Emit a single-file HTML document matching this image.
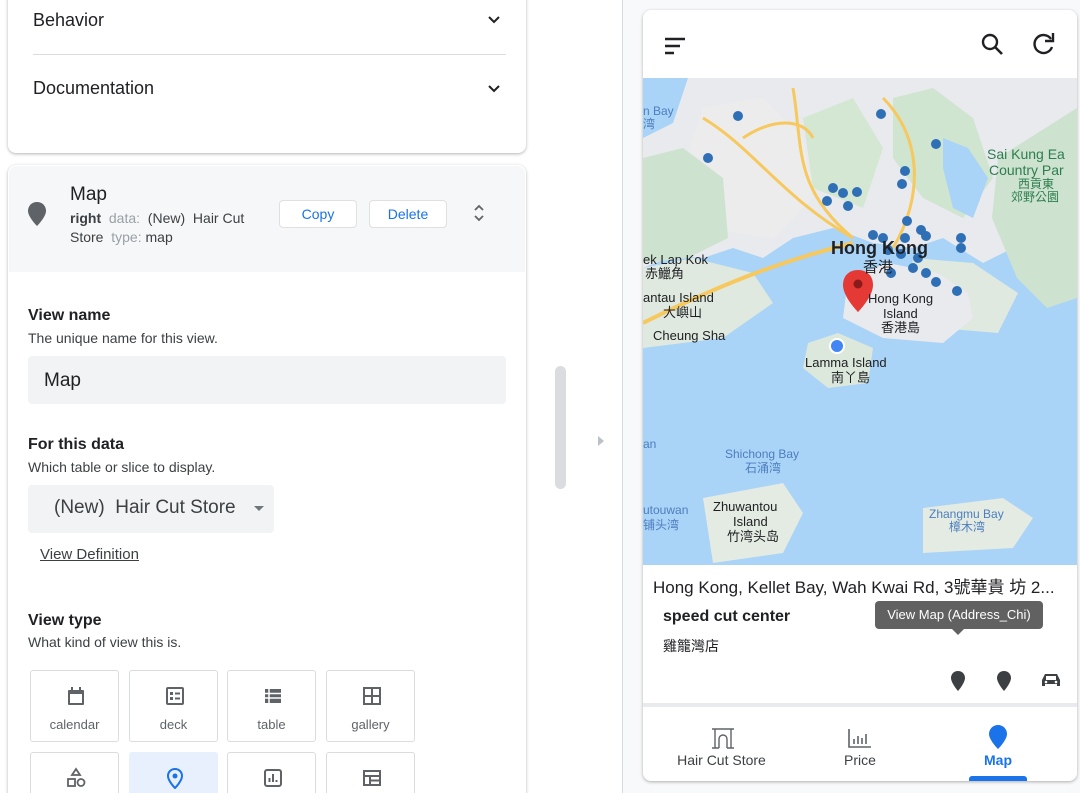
<!DOCTYPE html>
<html style="overflow:hidden;height:793px"><head><meta charset="utf-8"><style>
*{box-sizing:border-box;margin:0;padding:0}
body{width:1080px;height:793px;overflow:hidden;background:#fff;font-family:"Liberation Sans","Noto Sans CJK TC",sans-serif;position:relative;color:#202124}
.a{position:absolute}
.card{background:#fff;border-radius:8px;box-shadow:0 1px 3px rgba(0,0,0,.3)}
.lbl{font-size:16px;font-weight:bold;color:#202124}
.sub{font-size:14px;color:#3c4043}
.vt{position:absolute;width:89px;height:72px;border:1px solid #dadce0;border-radius:3px;background:#fff;text-align:center;font-size:13px;color:#5f6368}
.vt span{position:absolute;left:0;right:0;top:46px}
.vt svg{position:absolute;left:34px;top:14px}
.btn{position:absolute;background:#fff;border:1px solid #e0e0e0;border-radius:4px;color:#1a73e8;font-size:14px;text-align:center;line-height:26px}
</style></head><body>
<div class="a" style="left:0;top:0;width:1080px;height:793px;overflow:hidden">
<!-- card 1 -->
<div class="a card" style="left:8px;top:-10px;width:518px;height:163px"></div>
<div class="a" style="left:33px;top:10px;font-size:18px;color:#202124">Behavior</div>
<svg class="a" style="left:488px;top:15px" width="12" height="10"><path d="M1 2l5 5 5-5" stroke="#202124" stroke-width="2" fill="none"/></svg>
<div class="a" style="left:33px;top:54px;width:473px;border-top:1px solid #dadce0"></div>
<div class="a" style="left:33px;top:78px;font-size:18px;color:#202124">Documentation</div>
<svg class="a" style="left:488px;top:84px" width="12" height="10"><path d="M1 2l5 5 5-5" stroke="#202124" stroke-width="2" fill="none"/></svg>
<!-- card 2 -->
<div class="a card" style="left:8px;top:165px;width:518px;height:660px"></div>
<div class="a" style="left:9px;top:166px;width:516px;height:106px;background:#f6f7f9;border-radius:8px 8px 0 0"></div>
<svg class="a" style="left:27px;top:201px" width="20" height="26"><path d="M10 1C4.5 1 1 5 1 10c0 6 9 15 9 15s9-9 9-15C19 5 15.5 1 10 1z" fill="#5f6368"/></svg>
<div class="a" style="left:70px;top:184px;font-size:19px;color:#202124">Map</div>
<div class="a" style="left:70px;top:209px;font-size:14px;line-height:19px;color:#3c4043;width:178px"><b>right</b> &nbsp;<span style="color:#9aa0a6">data:</span> &nbsp;(New)&nbsp; Hair Cut Store &nbsp;<span style="color:#9aa0a6">type:</span> map</div>
<div class="btn" style="left:279px;top:200px;width:78px">Copy</div>
<div class="btn" style="left:369px;top:200px;width:78px">Delete</div>
<svg class="a" style="left:473px;top:204px" width="12" height="18"><path d="M2 6l4-4 4 4M2 12l4 4 4-4" stroke="#5f6368" stroke-width="1.8" fill="none"/></svg>
<div class="a lbl" style="left:28px;top:307px">View name</div>
<div class="a sub" style="left:28px;top:330px">The unique name for this view.</div>
<div class="a" style="left:28px;top:356px;width:478px;height:48px;background:#f1f3f4;border-radius:4px;font-size:19px;padding:14px 16px;color:#202124">Map</div>
<div class="a lbl" style="left:28px;top:436px">For this data</div>
<div class="a sub" style="left:28px;top:459px">Which table or slice to display.</div>
<div class="a" style="left:28px;top:485px;width:246px;height:48px;background:#f1f3f4;border-radius:4px;font-size:19px;padding:12px 0 0 26px;color:#3c4043">(New)&nbsp; Hair Cut Store</div>
<svg class="a" style="left:254px;top:506px" width="12" height="7"><path d="M0 0h10L5 5z" fill="#70757a"/></svg>
<div class="a" style="left:40px;top:546px;font-size:15px;color:#3c4043;text-decoration:underline">View Definition</div>
<div class="a lbl" style="left:28px;top:612px">View type</div>
<div class="a sub" style="left:28px;top:634px">What kind of view this is.</div>
<div class="vt" style="left:30px;top:670px"><svg width="22" height="22"><rect x="3" y="5" width="16" height="15" rx="1" fill="#5f6368"/><rect x="5" y="9" width="12" height="9" fill="#fff"/><rect x="6" y="2" width="2" height="4" fill="#5f6368"/><rect x="14" y="2" width="2" height="4" fill="#5f6368"/></svg><span>calendar</span></div>
<div class="vt" style="left:129px;top:670px"><svg width="22" height="22"><rect x="3" y="3" width="16" height="16" rx="1" stroke="#5f6368" stroke-width="2" fill="none"/><rect x="6" y="7" width="3" height="3" fill="#5f6368"/><rect x="6" y="12" width="3" height="3" fill="#5f6368"/><path d="M11 8.5h5M11 13.5h5" stroke="#5f6368" stroke-width="2"/></svg><span>deck</span></div>
<div class="vt" style="left:227px;top:670px"><svg width="22" height="22"><rect x="3" y="4" width="16" height="14" fill="#5f6368"/><path d="M3 8.5h16M3 13h16M7 4v14" stroke="#fff" stroke-width="1.5"/></svg><span>table</span></div>
<div class="vt" style="left:326px;top:670px"><svg width="22" height="22"><rect x="3" y="3" width="16" height="16" stroke="#5f6368" stroke-width="2" fill="none"/><path d="M11 3v16M3 11h16" stroke="#5f6368" stroke-width="2"/></svg><span>gallery</span></div>
<div class="vt" style="left:30px;top:752px"><svg width="22" height="22"><path d="M11 2l4 6H7z" stroke="#5f6368" stroke-width="1.8" fill="none"/><rect x="3" y="12" width="7" height="7" stroke="#5f6368" stroke-width="1.8" fill="none"/><circle cx="16" cy="15.5" r="3.5" stroke="#5f6368" stroke-width="1.8" fill="none"/></svg></div>
<div class="vt" style="left:129px;top:752px;background:#e8f0fe;border-color:#e8f0fe"><svg width="22" height="22"><path d="M11 2c-4 0-7 3-7 7 0 5 7 12 7 12s7-7 7-12c0-4-3-7-7-7z" stroke="#1a73e8" stroke-width="2" fill="none"/><circle cx="11" cy="9" r="2.5" fill="#1a73e8"/></svg></div>
<div class="vt" style="left:227px;top:752px"><svg width="22" height="22"><rect x="3" y="3" width="16" height="16" rx="2" stroke="#5f6368" stroke-width="2" fill="none"/><path d="M7.5 15v-4M11 15V7M14.5 15v-2" stroke="#5f6368" stroke-width="2"/></svg></div>
<div class="vt" style="left:326px;top:752px"><svg width="22" height="22"><rect x="3" y="4" width="16" height="14" stroke="#5f6368" stroke-width="2" fill="none"/><path d="M3 9h16M9 9v9M9 13.5h10" stroke="#5f6368" stroke-width="2"/></svg></div>
<!-- scrollbar/divider -->
<div class="a" style="left:555px;top:366px;width:11px;height:123px;background:#dadce0;border-radius:6px"></div>
<svg class="a" style="left:597px;top:435px" width="8" height="12"><path d="M1 1l6 5-6 5z" fill="#bdc1c6"/></svg>
<div class="a" style="left:622px;top:0;width:1px;height:793px;background:#dadce0"></div>
<div class="a" style="left:623px;top:0;width:457px;height:793px;background:#f8f9fa"></div>
<!-- phone -->
<div class="a card" style="left:643px;top:10px;width:434px;height:771px;overflow:hidden">
 <svg class="a" style="left:20px;top:26px" width="24" height="20"><path d="M2 3h20M2 10h15M2 17h9" stroke="#202124" stroke-width="2.6"/></svg>
 <svg class="a" style="left:337px;top:22px" width="26" height="26"><circle cx="10" cy="10" r="7" stroke="#202124" stroke-width="2.4" fill="none"/><path d="M15 15l7 7" stroke="#202124" stroke-width="2.6"/></svg>
 <svg class="a" style="left:387px;top:20px" width="28" height="28"><path d="M21 9A9 9 0 1 0 22 17" stroke="#202124" stroke-width="2.4" fill="none"/><path d="M23 3v8h-8" stroke="#202124" stroke-width="2.4" fill="none"/></svg>
 <svg class="a" style="left:0;top:68px" width="434" height="487">
  <rect width="434" height="487" fill="#a9d3f7"/>
  <path d="M45 0H434V40L420 80 395 130 370 170 340 185 300 160 270 170 230 165 190 150 150 160 120 180 90 170 60 180 30 178 0 190V60L30 45z" fill="#e8eaed"/>
  <path d="M60 30l60-10 40 40 10 60-40 40-70-10-20-60z" fill="#ececec"/>
  <path d="M250 20l40-10 40 30 20 60-30 40-40-20-30-40z" fill="#cfe5d0"/>
  <path d="M160 40l50-20 30 50-20 60-50-20z" fill="#d3e7d3"/>
  <path d="M300 60l25 10 20 30-15 40-20-10-10-40z" fill="#a9d3f7"/>
  <path d="M355 80l79-50v190l-30 10-30-30-25-60z" fill="#cde3cf"/>
  <path d="M0 80l40-10 40 30 5 60-40 20-45 5z" fill="#cde3cf"/>
  <path d="M0 190l50-10 60 15 20 30-50 35-80 10z" fill="#dfe9df"/>
  <path d="M270 180l60 5 45 30-20 40-60-5-30-30z" fill="#dfe9df"/>
  <path d="M205 200l40-15 50 10 30 20 5 25-30 25-60-5-40-20z" fill="#e8eaed"/>
  <path d="M165 265l30-10 35 15-5 35-40 5-25-20z" fill="#dde8dd"/>
  <path d="M60 420l80-15 20 30-20 40-70 10z" fill="#e3ebe3"/>
  <path d="M280 430l80-10 30 20-20 30-90 5z" fill="#e3ebe3"/>
  <path d="M0 245C90 200 150 180 210 165" stroke="#f6c85e" stroke-width="4" fill="none"/>
  <path d="M60 40c50 30 80 80 150 120M150 10c10 60 0 100 60 150M240 20c40 40 40 100 10 150M100 60c30-20 60-20 70 0" stroke="#f6c85e" stroke-width="3" fill="none"/>
  <g fill="#2f6fb5">
   <circle cx="95" cy="38" r="5"/><circle cx="238" cy="36" r="5"/><circle cx="65" cy="80" r="5"/><circle cx="293" cy="66" r="5"/><circle cx="262" cy="93" r="5"/><circle cx="259" cy="106" r="5"/>
   <circle cx="190" cy="110" r="5"/><circle cx="200" cy="115" r="5"/><circle cx="214" cy="114" r="5"/><circle cx="184" cy="123" r="5"/><circle cx="205" cy="128" r="5"/>
   <circle cx="264" cy="143" r="5"/><circle cx="278" cy="152" r="5"/><circle cx="230" cy="157" r="5"/><circle cx="240" cy="160" r="5"/><circle cx="262" cy="160" r="5"/><circle cx="283" cy="158" r="5"/>
   <circle cx="245" cy="172" r="5"/><circle cx="258" cy="176" r="5"/><circle cx="275" cy="180" r="5"/><circle cx="318" cy="160" r="5"/><circle cx="318" cy="170" r="5"/>
   <circle cx="270" cy="190" r="5"/><circle cx="283" cy="195" r="5"/><circle cx="293" cy="204" r="5"/><circle cx="314" cy="213" r="5"/><circle cx="248" cy="195" r="5"/>
  </g>
  <circle cx="194" cy="268" r="7" fill="#4285f4" stroke="#fff" stroke-width="2"/>
  <path d="M215 192c-9 0-15 6-15 15 0 12 15 27 15 27s15-15 15-27c0-9-6-15-15-15z" fill="#e53935"/><circle cx="215" cy="206" r="4.5" fill="#8b1a1a"/>
  <g font-size="13" fill="#202124" font-family="Liberation Sans, Noto Sans CJK TC, sans-serif">
   <text x="188" y="176" font-size="18" font-weight="bold">Hong Kong</text><text x="220" y="194" font-size="15">香港</text>
   <text x="0" y="186">ek Lap Kok</text><text x="2" y="200">赤鱲角</text>
   <text x="0" y="224">antau Island</text><text x="20" y="239">大嶼山</text>
   <text x="10" y="262">Cheung Sha</text>
   <text x="225" y="225">Hong Kong</text><text x="240" y="240">Island</text><text x="238" y="254">香港島</text>
   <text x="162" y="289">Lamma Island</text><text x="188" y="304">南丫島</text>
   <text x="70" y="433">Zhuwantou</text><text x="90" y="448">Island</text><text x="84" y="463">竹湾头岛</text>
  </g>
  <g font-size="12" fill="#4d7ebf" font-family="Liberation Sans, Noto Sans CJK TC, sans-serif">
   <text x="0" y="37">n Bay</text><text x="0" y="50">湾</text><text x="0" y="370">an</text>
   <text x="82" y="380">Shichong Bay</text><text x="102" y="394">石涌湾</text>
   <text x="286" y="440">Zhangmu Bay</text><text x="306" y="453">樟木湾</text>
   <text x="0" y="436">utouwan</text><text x="0" y="451">铺头湾</text>
  </g>
  <g font-size="14" fill="#2e7d4f" font-family="Liberation Sans, Noto Sans CJK TC, sans-serif"><text x="344" y="81">Sai Kung Ea</text><text x="346" y="97">Country Par</text><text x="375" y="110" font-size="12">西貢東</text><text x="368" y="123" font-size="12">郊野公園</text></g>
 </svg>
 <div class="a" style="left:0;top:555px;width:434px;height:145px;background:#fff"></div>
 <div class="a" style="left:10px;top:563px;font-size:17px;color:#202124;white-space:nowrap">Hong Kong, Kellet Bay, Wah Kwai Rd, 3號華貴 坊 2...</div>
 <div class="a" style="left:20px;top:598px;font-size:16px;font-weight:bold">speed cut center</div>
 <div class="a" style="left:20px;top:626px;font-size:14px">雞籠灣店</div>
 <div class="a" style="left:232px;top:591px;width:168px;height:28px;background:#616161;border-radius:4px;color:#fff;font-size:13px;text-align:center;line-height:28px">View Map (Address_Chi)</div>
 <div class="a" style="left:309px;top:619px;width:0;height:0;border:6px solid transparent;border-top-color:#616161"></div>
 <svg class="a" style="left:307px;top:660px" width="16" height="22"><path d="M8 1C4 1 1 4 1 8c0 5 7 13 7 13s7-8 7-13c0-4-3-7-7-7z" fill="#3c4043"/></svg>
 <svg class="a" style="left:353px;top:660px" width="16" height="22"><path d="M8 1C4 1 1 4 1 8c0 5 7 13 7 13s7-8 7-13c0-4-3-7-7-7z" fill="#3c4043"/></svg>
 <svg class="a" style="left:398px;top:662px" width="20" height="16"><path d="M4 2h12l3 6v6h-3v-2H4v2H1V8z" fill="#3c4043"/><rect x="5" y="4" width="10" height="4" fill="#fff"/><circle cx="5" cy="10" r="1.3" fill="#fff"/><circle cx="15" cy="10" r="1.3" fill="#fff"/></svg>
 <div class="a" style="left:0;top:693px;width:434px;height:4px;background:#e8eaed"></div>
 <svg class="a" style="left:68px;top:717px" width="24" height="22"><path d="M1 2h22M4 2v19M20 2v19M8 21V12a4 4 0 0 1 8 0v9M1 21h7M16 21h7" stroke="#5f6368" stroke-width="1.4" fill="none"/></svg>
 <div class="a" style="left:0;top:742px;width:157px;text-align:center;font-size:14px;color:#3c4043">Hair Cut Store</div>
 <svg class="a" style="left:205px;top:718px" width="24" height="20"><path d="M1 1v18h22M6 16v-5M10 16V8M14 16v-6M18 16V6" stroke="#5f6368" stroke-width="1.6" fill="none"/></svg>
 <div class="a" style="left:140px;top:742px;width:154px;text-align:center;font-size:14px;color:#3c4043">Price</div>
 <svg class="a" style="left:345px;top:714px" width="20" height="26"><path d="M10 1C5 1 1 5 1 10c0 6 9 15 9 15s9-9 9-15c0-5-4-9-9-9z" fill="#1a73e8"/></svg>
 <div class="a" style="left:280px;top:742px;width:150px;text-align:center;font-size:14px;font-weight:bold;color:#1a73e8">Map</div>
 <div class="a" style="left:326px;top:766px;width:58px;height:6px;background:#1a73e8;border-radius:3px 3px 0 0"></div>
</div>
</div>
</body></html>
